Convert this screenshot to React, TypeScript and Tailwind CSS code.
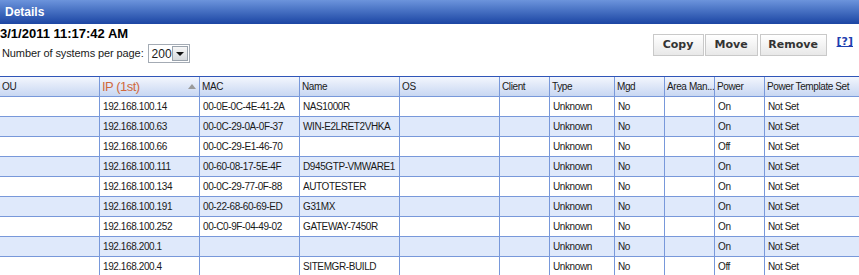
const columns = [
  { label: "OU", w: "w-[100px]" },
  { label: "IP (1st)", w: "w-[100px]", sorted: true },
  { label: "MAC", w: "w-[100px]" },
  { label: "Name", w: "w-[100px]" },
  { label: "OS", w: "w-[100px]" },
  { label: "Client", w: "w-[50px]" },
  { label: "Type", w: "w-[65px]" },
  { label: "Mgd", w: "w-[50px]" },
  { label: "Area Man...", w: "w-[50px]" },
  { label: "Power", w: "w-[50px]" },
  { label: "Power Template Set", w: "w-[110px]" },
];

const rows = [
  ["", "192.168.100.14", "00-0E-0C-4E-41-2A", "NAS1000R", "", "", "Unknown", "No", "", "On", "Not Set"],
  ["", "192.168.100.63", "00-0C-29-0A-0F-37", "WIN-E2LRET2VHKA", "", "", "Unknown", "No", "", "On", "Not Set"],
  ["", "192.168.100.66", "00-0C-29-E1-46-70", "", "", "", "Unknown", "No", "", "Off", "Not Set"],
  ["", "192.168.100.111", "00-60-08-17-5E-4F", "D945GTP-VMWARE1", "", "", "Unknown", "No", "", "On", "Not Set"],
  ["", "192.168.100.134", "00-0C-29-77-0F-88", "AUTOTESTER", "", "", "Unknown", "No", "", "On", "Not Set"],
  ["", "192.168.100.191", "00-22-68-60-69-ED", "G31MX", "", "", "Unknown", "No", "", "On", "Not Set"],
  ["", "192.168.100.252", "00-C0-9F-04-49-02", "GATEWAY-7450R", "", "", "Unknown", "No", "", "On", "Not Set"],
  ["", "192.168.200.1", "", "", "", "", "Unknown", "No", "", "On", "Not Set"],
  ["", "192.168.200.4", "", "SITEMGR-BUILD", "", "", "Unknown", "No", "", "Off", "Not Set"],
];

export default function App() {
  return (
    <div className="w-[859px] h-[275px] overflow-hidden bg-white font-['Liberation_Sans',Arial,sans-serif] text-[#1a1a1a]">
      <div className="h-[24px] flex items-center pl-[5px] bg-linear-to-b from-[#6c94dc] to-[#1c45a3] text-white text-[12px] font-bold">
        Details
      </div>

      <div className="flex justify-between h-[52px]">
        <div>
          <div className="text-[13px] font-bold leading-[16px] mt-[2px] text-black">3/1/2011 11:17:42 AM</div>
          <div className="flex items-center mt-[2px] pl-[2px] text-[11px]">
            <span className="tracking-[-0.1px]">Number of systems per page:</span>
            <div className="ml-[4px] flex items-center h-[19px] w-[42px] border border-[#a4abb4] bg-white pl-[3px] pr-[1px]">
              <span className="text-[12px] flex-1">200</span>
              <span className="flex items-center justify-center w-[16px] h-[15px] border border-[#9aa3ad] bg-linear-to-b from-[#f7f7f7] to-[#d6d9dd]">
                <svg width="8" height="4" viewBox="0 0 8 4"><path d="M0 0h8L4 4z" fill="#111" /></svg>
              </span>
            </div>
          </div>
        </div>
        <div className="flex items-start mt-[10px] pr-[6px] font-['DejaVu_Sans',Verdana,sans-serif]">
          {["Copy", "Move", "Remove"].map((b, i) => (
            <button
              key={b}
              className={`h-[22px] border border-[#c9c9c9] bg-linear-to-b from-white to-[#e8e8e8] text-[11px] font-bold text-[#333] ${
                i === 0 ? "w-[51px]" : i === 1 ? "w-[53px] ml-[1px]" : "w-[67px] ml-[2px]"
              }`}
            >
              {b}
            </button>
          ))}
          <span className="ml-[10px] text-[11px] font-bold text-[#1f3fb0] underline">[?]</span>
        </div>
      </div>

      <div className="border-t border-[#2f55b8] w-[880px]">
        <div className="flex h-[20px] border-b border-[#7898da] bg-linear-to-b from-[#f3f6fd] to-[#c8d7f2] text-[10px] tracking-[-0.4px]">
          {columns.map((c) => (
            <div key={c.label} className={`${c.w} shrink-0 border-r border-[#7898da] flex items-center pl-[2px] whitespace-nowrap overflow-hidden`}>
              {c.sorted ? (
                <div className="flex items-center justify-between w-full pr-[3px]">
                  <span className="text-[13px] tracking-[-0.5px] text-[#d0693c]">{c.label}</span>
                  <svg width="8" height="5" viewBox="0 0 8 5"><path d="M0 5h8L4 0z" fill="#9a9a9a" /></svg>
                </div>
              ) : (
                c.label
              )}
            </div>
          ))}
        </div>
        {rows.map((r, ri) => (
          <div key={ri} className={`flex h-[20px] border-b border-[#7898da] text-[10px] tracking-[-0.4px] ${ri % 2 === 1 ? "bg-[#dfe9fb]" : "bg-white"}`}>
            {r.map((v, ci) => (
              <div key={ci} className={`${columns[ci].w} shrink-0 border-r border-[#7898da] flex items-center pl-[3px] whitespace-nowrap overflow-hidden`}>
                {v}
              </div>
            ))}
          </div>
        ))}
      </div>
    </div>
  );
}
